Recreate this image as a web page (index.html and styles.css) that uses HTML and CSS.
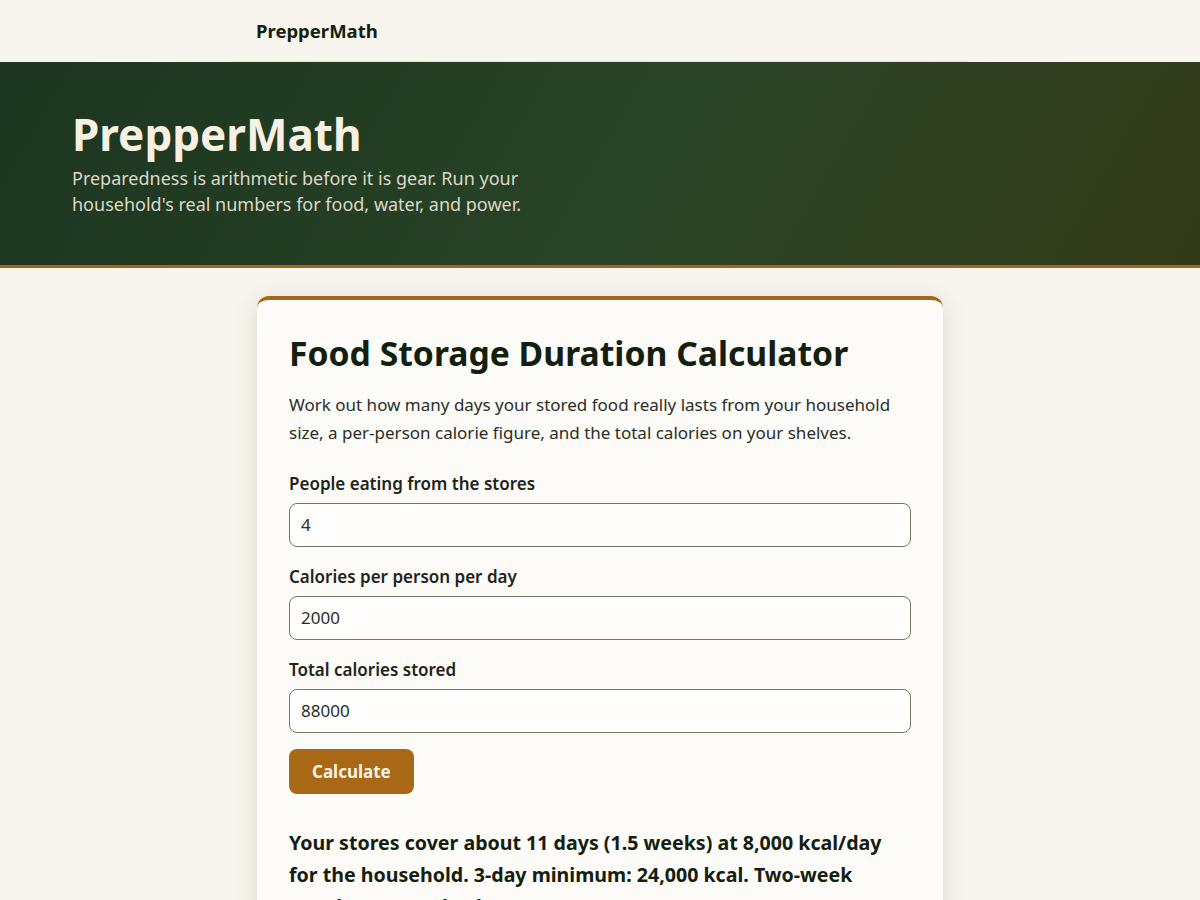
FILE: index.html
```html
<!DOCTYPE html>
<html lang="en">
<head>
<meta charset="utf-8">
<title>PrepperMath</title>
<link rel="stylesheet" href="styles.css">
</head>
<body>
<header class="topbar">
  <nav class="nav">
    <a class="brand" href="#">PrepperMath</a>
  </nav>
</header>
<section class="hero">
  <h1 class="hero-title">PrepperMath</h1>
  <p class="hero-sub">Preparedness is arithmetic before it is gear. Run your household's real numbers for food, water, and power.</p>
</section>
<main class="main">
  <div class="card">
    <h2 class="card-title">Food Storage Duration Calculator</h2>
    <p class="card-desc">Work out how many days your stored food really lasts from your household size, a per-person calorie figure, and the total calories on your shelves.</p>
    <form class="form">
      <label class="field">
        <span class="label">People eating from the stores</span>
        <input class="input" type="text" value="4">
      </label>
      <label class="field">
        <span class="label">Calories per person per day</span>
        <input class="input" type="text" value="2000">
      </label>
      <label class="field">
        <span class="label">Total calories stored</span>
        <input class="input" type="text" value="88000">
      </label>
      <div class="actions">
        <button class="btn" type="button">Calculate</button>
      </div>
    </form>
    <p class="result">Your stores cover about 11 days (1.5 weeks) at 8,000 kcal/day for the household. 3-day minimum: 24,000 kcal. Two-week supply: 112,000 kcal.</p>
  </div>
</main>
</body>
</html>
```
FILE: styles.css
```css
* { box-sizing: border-box; }
html, body { margin: 0; padding: 0; }
body {
  background: #f8f5ee;
  font-family: "Noto Sans", "Open Sans", sans-serif;
  color: #1a2418;
}
.topbar {
  background: #f8f5ee;
}
.nav {
  width: 736px;
  margin: 0 auto;
  height: 62px;
  padding: 0 24px;
  display: flex;
  align-items: center;
  border-bottom: 1px solid #e6e2d8;
}
.brand {
  font-weight: 700;
  font-size: 18.5px;
  color: #14200f;
  text-decoration: none;
}
.hero {
  background: linear-gradient(120deg, #1b3520 0%, #2a4427 55%, #343a17 100%);
  border-bottom: 3px solid #a4661c;
  padding: 46px 72px 48px;
}
.hero-title {
  margin: 0 0 4px;
  font-size: 44px;
  line-height: 1.2;
  font-weight: 700;
  color: #f6f1e3;
}
.hero-sub {
  margin: 0;
  max-width: 470px;
  font-size: 18px;
  line-height: 26px;
  color: #ddd8c8;
}
.main {
  padding: 28px 0 40px;
  display: flex;
  justify-content: center;
}
.card {
  width: 686px;
  background: #fcfbf8;
  border-top: 4px solid #a4661c;
  border-radius: 12px;
  box-shadow: 0 6px 24px rgba(60, 50, 30, 0.14);
  padding: 32px 32px 40px;
}
.card-title {
  margin: 0 0 15px;
  font-size: 33.7px;
  line-height: 1.3;
  font-weight: 700;
  color: #14200f;
}
.card-desc {
  margin: 0 0 25px;
  font-size: 17px;
  line-height: 28px;
  color: #2a2e26;
}
.form {
  display: flex;
  flex-direction: column;
  gap: 18px;
}
.field {
  display: flex;
  flex-direction: column;
  gap: 7px;
}
.label {
  font-size: 17px;
  font-weight: 600;
  line-height: 24px;
  color: #1e2419;
}
.input {
  height: 44px;
  border: 1px solid #74786c;
  border-radius: 8px;
  background: #fffefc;
  padding: 0 11px;
  font-family: inherit;
  font-size: 17px;
  color: #2a2e26;
}
.actions {
  margin-top: -2px;
}
.btn {
  height: 45px;
  padding: 0 23px;
  background: #a86816;
  color: #fbf4e6;
  border: none;
  border-radius: 8px;
  font-family: inherit;
  font-size: 17px;
  font-weight: 700;
}
.result {
  margin: 33px 0 0;
  font-size: 19.6px;
  line-height: 32px;
  font-weight: 700;
  color: #14200f;
}
```
